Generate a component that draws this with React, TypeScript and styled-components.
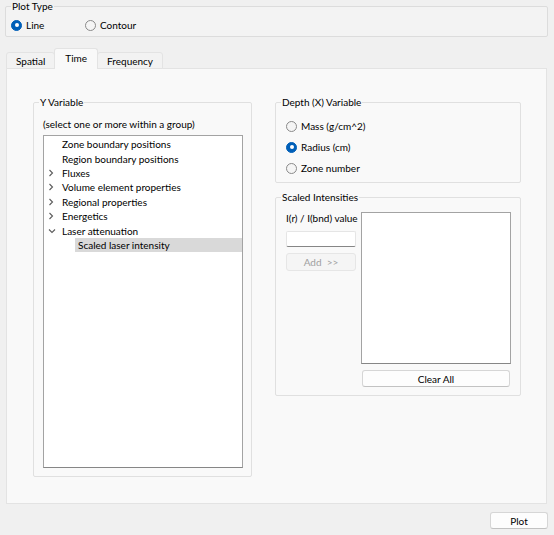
import React from 'react';
import styled, { createGlobalStyle } from 'styled-components';

const GlobalStyle = createGlobalStyle`
  html, body {
    margin: 0;
    padding: 0;
    background: #f0f0f0;
  }
  body {
    font-family: Lato, 'Noto Sans', sans-serif;
    font-size: 10px;
    color: #000;
  }
  * {
    box-sizing: border-box;
  }
`;

const Window = styled.div`
  width: 554px;
  height: 535px;
  padding: 0 6px 0 5px;
  display: flex;
  flex-direction: column;
`;

const Group = styled.fieldset<{ $bg?: string }>`
  margin: 0;
  padding: 0;
  min-width: 0;
  border: 1px solid #dcdcdc;
  border-radius: 2px;
  background: ${p => p.$bg || 'transparent'};
`;

const Title = styled.legend`
  margin-left: 5px;
  padding: 0 1px;
  line-height: 12px;
  height: 12px;
  font-size: 10px;
`;

const PlotTypeBody = styled.div`
  padding: 6px 0 4px 5px;
  display: grid;
  grid-template-columns: 74px auto;
`;

const RadioItem = styled.label`
  display: flex;
  align-items: center;
  gap: 4px;
  height: 14px;
  line-height: 14px;
`;

const RadioMark = styled.span<{ $checked?: boolean }>`
  width: 11px;
  height: 11px;
  border-radius: 50%;
  flex: none;
  display: flex;
  align-items: center;
  justify-content: center;
  background: ${p => (p.$checked ? '#005fb8' : '#f5f5f5')};
  border: 1px solid ${p => (p.$checked ? '#005fb8' : '#8a8a8a')};

  &::after {
    content: '';
    display: ${p => (p.$checked ? 'block' : 'none')};
    width: 4px;
    height: 4px;
    border-radius: 50%;
    background: #fff;
  }
`;

const TabWidget = styled.div`
  margin: 10px 1px 0;
  display: flex;
  flex-direction: column;
`;

const TabBar = styled.div`
  display: flex;
  align-items: flex-end;
  height: 21px;
`;

const Tab = styled.div<{ $active?: boolean }>`
  position: relative;
  z-index: ${p => (p.$active ? 1 : 0)};
  height: ${p => (p.$active ? '21px' : '17px')};
  margin-bottom: -1px;
  margin-left: ${p => (p.$active ? '-1px' : '0')};
  margin-right: ${p => (p.$active ? '-1px' : '0')};
  padding: ${p => (p.$active ? '0 10px 3px' : '0 9px')};
  display: flex;
  align-items: center;
  border: 1px solid #e3e3e3;
  border-bottom: ${p => (p.$active ? 'none' : '1px solid #e3e3e3')};
  border-radius: 3px 3px 0 0;
  background: ${p => (p.$active ? '#f9f9f9' : '#f2f2f2')};
  & + & {
    border-left: ${p => (p.$active ? '1px solid #e3e3e3' : 'none')};
  }
`;

const Pane = styled.div`
  height: 436px;
  border: 1px solid #e3e3e3;
  background: #f9f9f9;
  padding: 27px 0 0 26px;
  display: flex;
  align-items: flex-start;
  gap: 23px;
`;

const YGroup = styled(Group)`
  width: 219px;
  border-color: #e0e0e0;
`;

const YBody = styled.div`
  padding: 10px 8px 8px 9px;
`;

const Hint = styled.div`
  line-height: 13px;
  height: 13px;
`;

const TreeBox = styled.div`
  margin-top: 4px;
  height: 333px;
  background: #fff;
  border: 1px solid #a3a3a3;
  border-bottom-color: #868686;
  padding-top: 1px;
`;

const TreeRow = styled.div<{ $child?: boolean; $selected?: boolean }>`
  height: 14.4px;
  display: flex;
  align-items: center;
  margin-left: ${p => (p.$child ? '31px' : '0')};
  padding-left: ${p => (p.$child ? '3px' : '2px')};
  background: ${p => (p.$selected ? '#d9d9d9' : 'transparent')};
  white-space: nowrap;
`;

const Branch = styled.span`
  width: 16px;
  height: 14px;
  flex: none;
  display: flex;
  align-items: center;
  padding-left: 2px;
`;

const RightColumn = styled.div`
  width: 246px;
  display: flex;
  flex-direction: column;
  gap: 8px;
`;

const SideGroup = styled(Group)`
  border-color: #e0e0e0;
`;

const DepthBody = styled.div`
  padding: 11px 0 7px 10px;
  display: flex;
  flex-direction: column;
  gap: 7px;
`;

const ScaledBody = styled.div`
  padding: 9px 8px 8px 10px;
  display: grid;
  grid-template-columns: 70px 150px;
  gap: 5px;
`;

const InputColumn = styled.div`
  display: flex;
  flex-direction: column;
`;

const FieldLabel = styled.div`
  line-height: 13px;
  height: 13px;
  white-space: nowrap;
`;

const ValueInput = styled.input`
  margin-top: 6px;
  height: 16px;
  width: 70px;
  background: #fff;
  border: 1px solid #e5e5e5;
  border-bottom-color: #868686;
  border-radius: 2px;
  padding: 0 3px;
  font: inherit;
  outline: none;
`;

const Button = styled.button<{ $width?: string }>`
  height: 17px;
  width: ${p => p.$width || 'auto'};
  padding: 0;
  font-family: inherit;
  font-size: 10px;
  color: #000;
  background: #fdfdfd;
  border: 1px solid #d6d6d6;
  border-bottom-color: #c2c2c2;
  border-radius: 3px;
  white-space: pre;

  &:disabled {
    color: #a0a0a0;
    background: #f5f5f5;
    border-color: #e6e6e6;
  }
`;

const AddButton = styled(Button)`
  margin-top: 6px;
  height: 18px;
`;

const ListColumn = styled.div`
  display: flex;
  flex-direction: column;
  gap: 6px;
`;

const ListBox = styled.div`
  height: 152px;
  background: #fff;
  border: 1px solid #a3a3a3;
  border-bottom-color: #868686;
`;

const ClearButton = styled(Button)`
  margin: 0 1px;
`;

const Footer = styled.div`
  margin-top: 8px;
  display: flex;
  justify-content: flex-end;
`;

function Radio({ label, checked }: { label: string; checked?: boolean }) {
  return (
    <RadioItem>
      <RadioMark $checked={checked} />
      {label}
    </RadioItem>
  );
}

function Chevron({ open }: { open?: boolean }) {
  if (open) {
    return (
      <svg width="8" height="6" viewBox="0 0 8 6">
        <polyline points="1,1.5 4,4.5 7,1.5" fill="none" stroke="#5c5c5c" strokeWidth="1.1" />
      </svg>
    );
  }
  return (
    <svg width="6" height="8" viewBox="0 0 6 8">
      <polyline points="1.5,1 4.5,4 1.5,7" fill="none" stroke="#5c5c5c" strokeWidth="1.1" />
    </svg>
  );
}

type Node = { label: string; branch?: 'open' | 'closed'; child?: boolean; selected?: boolean };

const treeItems: Node[] = [
  { label: 'Zone boundary positions' },
  { label: 'Region boundary positions' },
  { label: 'Fluxes', branch: 'closed' },
  { label: 'Volume element properties', branch: 'closed' },
  { label: 'Regional properties', branch: 'closed' },
  { label: 'Energetics', branch: 'closed' },
  { label: 'Laser attenuation', branch: 'open' },
  { label: 'Scaled laser intensity', child: true, selected: true },
];

export default function App() {
  return (
    <>
      <GlobalStyle />
      <Window>
        <Group $bg="#f3f3f3">
          <Title>Plot Type</Title>
          <PlotTypeBody>
            <Radio label="Line" checked />
            <Radio label="Contour" />
          </PlotTypeBody>
        </Group>

        <TabWidget>
          <TabBar>
            <Tab>Spatial</Tab>
            <Tab $active>Time</Tab>
            <Tab>Frequency</Tab>
          </TabBar>
          <Pane>
            <YGroup>
              <Title>Y Variable</Title>
              <YBody>
                <Hint>(select one or more within a group)</Hint>
                <TreeBox>
                  {treeItems.map(item => (
                    <TreeRow key={item.label} $child={item.child} $selected={item.selected}>
                      {!item.child && (
                        <Branch>{item.branch && <Chevron open={item.branch === 'open'} />}</Branch>
                      )}
                      {item.label}
                    </TreeRow>
                  ))}
                </TreeBox>
              </YBody>
            </YGroup>

            <RightColumn>
              <SideGroup>
                <Title>Depth (X) Variable</Title>
                <DepthBody>
                  <Radio label="Mass (g/cm^2)" />
                  <Radio label="Radius (cm)" checked />
                  <Radio label="Zone number" />
                </DepthBody>
              </SideGroup>

              <SideGroup>
                <Title>Scaled Intensities</Title>
                <ScaledBody>
                  <InputColumn>
                    <FieldLabel>I(r) / I(bnd) value</FieldLabel>
                    <ValueInput />
                    <AddButton disabled>{'Add  >>'}</AddButton>
                  </InputColumn>
                  <ListColumn>
                    <ListBox />
                    <ClearButton>Clear All</ClearButton>
                  </ListColumn>
                </ScaledBody>
              </SideGroup>
            </RightColumn>
          </Pane>
        </TabWidget>

        <Footer>
          <Button $width="58px">Plot</Button>
        </Footer>
      </Window>
    </>
  );
}
